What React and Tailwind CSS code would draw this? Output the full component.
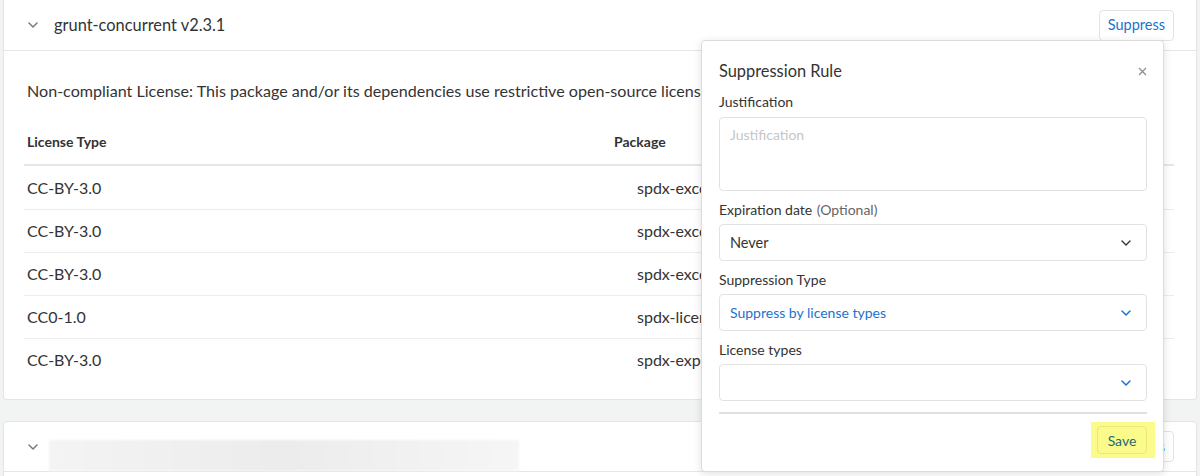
import React from "react";

const Chevron = ({ className = "", color = "#7a7a7a", w = 10, h = 6, sw = 1.5 }) => (
  <svg width={w} height={h} viewBox="0 0 10 6" className={className} fill="none">
    <path d="M1 1 L5 5 L9 1" stroke={color} strokeWidth={sw} strokeLinecap="round" strokeLinejoin="round" />
  </svg>
);

const rows = [
  ["CC-BY-3.0", "spdx-exceptions"],
  ["CC-BY-3.0", "spdx-exceptions"],
  ["CC-BY-3.0", "spdx-exceptions"],
  ["CC0-1.0", "spdx-license-ids"],
  ["CC-BY-3.0", "spdx-expression-parse"],
];

function SuppressBtn() {
  return (
    <button className="h-[31px] px-[8px] rounded-[4px] border border-[#e3e3e3] bg-white text-[14.5px] text-[#1a73d0]">
      Suppress
    </button>
  );
}

export default function App() {
  return (
    <div
      className="relative w-[1200px] h-[476px] overflow-hidden bg-[#f2f3f3]"
      style={{ fontFamily: "Lato, 'Open Sans', sans-serif" }}
    >
      <div className="flex flex-col gap-[21px] px-[3px]">
        {/* Card 1 */}
        <div className="bg-white border-x border-b border-[#e4e4e4] rounded-b-[4px]">
          <div className="h-[51px] flex items-center justify-between border-b border-[#e6e6e6] pl-[24px] pr-[22px]">
            <div className="flex items-center">
              <Chevron className="mr-[16px]" />
              <span className="text-[16.4px] text-[#333]">grunt-concurrent v2.3.1</span>
            </div>
            <SuppressBtn />
          </div>
          <div className="pt-[28px] pb-[18px] pl-[20px] pr-[22px]">
            <p className="pl-[3px] text-[16.1px] leading-[24px] text-[#333] whitespace-nowrap overflow-hidden">
              Non-compliant License: This package and/or its dependencies use restrictive open-source licenses.
            </p>
            <div className="mt-[15px]">
              <div className="flex h-[48px] items-center border-b-2 border-[#e6e6e6] text-[14px] font-bold text-[#333]">
                <div className="w-[586px] pl-[3px]">License Type</div>
                <div className="pl-[4px]">Package</div>
              </div>
              {rows.map((r, i) => (
                <div
                  key={i}
                  className={`flex h-[43px] items-center text-[16px] text-[#333] ${i > 0 ? "border-t border-[#ececec]" : ""}`}
                >
                  <div className="w-[586px] pl-[3px]">{r[0]}</div>
                  <div className="pl-[27px]">{r[1]}</div>
                </div>
              ))}
            </div>
          </div>
        </div>

        {/* Card 2 */}
        <div className="bg-white border border-[#e4e4e4] rounded-t-[4px]">
          <div className="h-[50px] flex items-center justify-between border-b border-[#e6e6e6] pl-[24px] pr-[22px]">
            <div className="flex items-center">
              <Chevron className="mr-[11px]" />
              <div className="w-[470px] h-[31px] mt-[17px] bg-gradient-to-r from-[#f4f4f4] via-[#ececec] to-[#f6f6f6] blur-[1px]" />
            </div>
            <SuppressBtn />
          </div>
          <div className="h-[20px]" />
        </div>
      </div>

      {/* Popover */}
      <div className="absolute left-[701px] top-[40px] w-[463px] h-[432px] bg-white border border-[#dcdcdc] rounded-[4px] shadow-[0_2px_8px_rgba(0,0,0,0.12)] pt-[18px] pl-[17px] pr-[16px]">
        <div className="flex items-center justify-between h-[24px]">
          <span className="text-[16.4px] text-[#333]">Suppression Rule</span>
          <svg width="9" height="9" viewBox="0 0 9 9">
            <path d="M1 1 L8 8 M8 1 L1 8" stroke="#8c8c8c" strokeWidth="1.2" />
          </svg>
        </div>
        <div className="mt-[8px] text-[14px] leading-[22px] text-[#333]">Justification</div>
        <div className="mt-[4px] h-[74px] rounded-[4px] border border-[#e2e2e2] px-[10px] pt-[6px] text-[14px] text-[#c6c6c6]">
          Justification
        </div>

        <div className="mt-[8px] text-[14px] leading-[22px] text-[#333]">
          Expiration date <span className="text-[#666] ml-[1px]">(Optional)</span>
        </div>
        <div className="mt-[3px] h-[37px] rounded-[4px] border border-[#e2e2e2] flex items-center justify-between pl-[10px] pr-[15px] text-[14.5px] text-[#333]">
          <span>Never</span>
          <Chevron color="#333" w={10} h={6} sw={1.4} />
        </div>

        <div className="mt-[8px] text-[14px] leading-[22px] text-[#333]">Suppression Type</div>
        <div className="mt-[3px] h-[37px] rounded-[4px] border border-[#e2e2e2] flex items-center justify-between pl-[10px] pr-[15px] text-[14px] text-[#1a73d0]">
          <span>Suppress by license types</span>
          <Chevron color="#1a73d0" w={10} h={6} sw={1.5} />
        </div>

        <div className="mt-[8px] text-[14px] leading-[22px] text-[#333]">License types</div>
        <div className="mt-[3px] h-[37px] rounded-[4px] border border-[#e2e2e2] flex items-center justify-end pr-[15px]">
          <Chevron color="#1a73d0" w={10} h={6} sw={1.5} />
        </div>

        <div className="mt-[11px] h-[2px] bg-[#e0e0e0]" />

        <div className="flex justify-end mt-[8px] -mr-[8px]">
          <div className="bg-[#fbfb8c] pl-[6px] pt-[4px] pr-[8px] pb-[4px]">
            <button className="h-[28px] w-[50px] rounded-[4px] border border-[#e8e87a] text-[14px] text-[#1f6b6f]">
              Save
            </button>
          </div>
        </div>
      </div>
    </div>
  );
}
